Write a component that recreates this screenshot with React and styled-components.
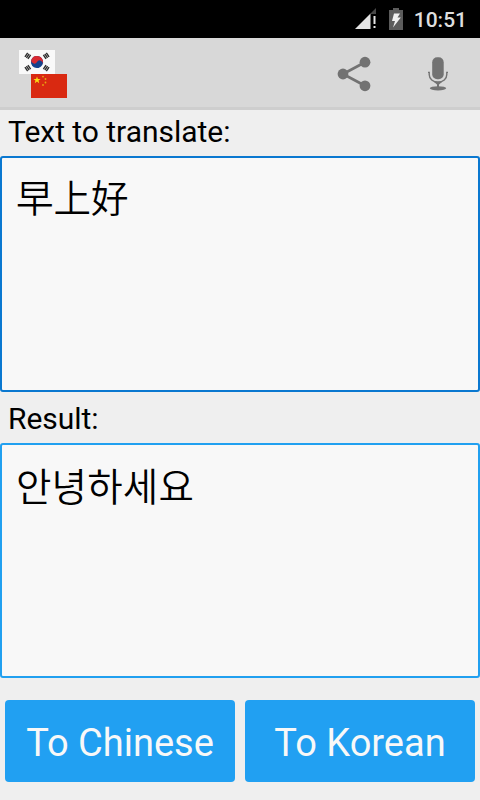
import React, { useState } from "react";
import styled, { createGlobalStyle } from "styled-components";

const GlobalStyle = createGlobalStyle`
  * {
    box-sizing: border-box;
  }
  body {
    margin: 0;
    background: #efefef;
    font-family: Roboto, "Noto Sans CJK KR", sans-serif;
  }
`;
const Screen = styled.div`
  width: 480px;
  height: 800px;
  display: flex;
  flex-direction: column;
  background: #efefef;
  overflow: hidden;
`;
const StatusBar = styled.div`
  height: 38px;
  flex: none;
  display: flex;
  align-items: center;
  justify-content: flex-end;
  padding-right: 13px;
  background: #000;
`;
const StatusIcon = styled.svg`
  display: block;
  margin-right: ${(props) => props.$gap}px;
`;
const Clock = styled.div`
  padding-top: 2px;
  font-size: 21px;
  font-weight: 500;
  line-height: 36px;
  color: #dedede;
`;
const ActionBar = styled.div`
  height: 72px;
  flex: none;
  display: flex;
  align-items: center;
  justify-content: space-between;
  padding: 3px 24px 0 19px;
  background: #d8d8d8;
  border-bottom: 3px solid #cecece;
`;
const Actions = styled.div`
  display: flex;
  align-items: center;
  gap: 48px;
`;
const IconButton = styled.button`
  display: block;
  padding: 0;
  border: 0;
  background: none;
  cursor: pointer;
  svg {
    display: block;
  }
`;
const Label = styled.label`
  height: ${(props) => props.$height}px;
  flex: none;
  padding: ${(props) => props.$top}px 8px 0;
  font-size: 30px;
  letter-spacing: -0.03px;
  line-height: 36px;
  color: #000;
`;
const TextBox = styled.div`
  height: ${(props) => props.$height}px;
  flex: none;
  padding: ${(props) => props.$top}px 14px 10px;
  border: 2px solid ${(props) => (props.$focused ? "#0a78d0" : "#21a0f0")};
  border-radius: 3px;
  background: #f8f8f8;
  font-family: Roboto, "Noto Sans CJK ${(props) => props.$script}", sans-serif;
  font-size: ${(props) => props.$size}px;
  font-weight: 350;
  letter-spacing: ${(props) => props.$spacing}px;
  line-height: 56px;
  color: #000;
  outline: none;
`;
const ButtonRow = styled.div`
  display: grid;
  grid-template-columns: 1fr 1fr;
  gap: 10px;
  padding: 22px 5px 18px;
`;
const StyleButton = styled.button`
  height: 82px;
  padding: 4px 0 0;
  border: 0;
  border-radius: 4px;
  background: #21a0f2;
  font-family: inherit;
  font-size: 38px;
  color: #f8f8f8;
  cursor: pointer;
`;

function SignalIcon() {
  return (
    <StatusIcon $gap={12} width="22" height="22" viewBox="0 0 22 22">
      <path d="M21 0V6H15.5V5.5Z" fill="#484848" />
      <path d="M0 21L15.5 5.5V21Z" fill="#e4e4e4" />
      <path d="M18.5 8H20.5V16H18.5ZM18.5 18H20.5V20H18.5Z" fill="#e4e4e4" />
    </StatusIcon>
  );
}

function BatteryIcon() {
  return (
    <StatusIcon $gap={11} width="14" height="22" viewBox="0 0 14 22">
      <path d="M4 0H10V2H14V22H0V2H4Z" fill="#5c5c5c" />
      <path d="M5 5.5H11L8.5 9.5H11.8L4 19.5L6 13H3Z" fill="#f0f0f0" />
    </StatusIcon>
  );
}

function Trigram({ x, y, angle }) {
  return (
    <g transform={`translate(${x} ${y}) rotate(${angle})`} fill="#2c2c2c">
      <rect x="-2.4" y="-2.5" width="4.8" height="1.4" />
      <rect x="-2.4" y="-0.7" width="4.8" height="1.4" />
      <rect x="-2.4" y="1.1" width="4.8" height="1.4" />
    </g>
  );
}

function FlagsLogo() {
  return (
    <svg width="48" height="48" viewBox="0 0 48 48">
      <rect width="36" height="24" fill="#f9f9f9" />
      <g transform="rotate(30 18 12)">
        <circle cx="18" cy="12" r="6.1" fill="#14418c" />
        <path
          d="M11.9 12A6.1 6.1 0 0 1 24.1 12A3.05 3.05 0 0 0 18 12A3.05 3.05 0 0 1 11.9 12Z"
          fill="#d82a32"
        />
      </g>
      <Trigram x={8.8} y={5.8} angle={-56} />
      <Trigram x={27.2} y={5.8} angle={56} />
      <Trigram x={8.8} y={18.2} angle={56} />
      <Trigram x={27.2} y={18.2} angle={-56} />
      <rect x="12" y="24" width="36" height="24" fill="#d92911" />
      <path
        d="M18 26.4L18.9 28.9H21.6L19.5 30.6L20.2 33.2L18 31.6L15.8 33.2L16.5 30.6L14.4 28.9H17.1Z"
        fill="#fbdc14"
      />
      <g fill="#eaa512">
        <circle cx="24" cy="26.6" r="0.9" />
        <circle cx="26.5" cy="29" r="0.9" />
        <circle cx="26.5" cy="32.5" r="0.9" />
        <circle cx="24" cy="35" r="0.9" />
      </g>
    </svg>
  );
}

function ShareIcon() {
  return (
    <svg width="34" height="36" viewBox="0 0 34 36">
      <path
        d="M28 6.2L6 18L28 29.8"
        fill="none"
        stroke="#727272"
        strokeWidth="2.7"
      />
      <g fill="#727272">
        <circle cx="28" cy="6.2" r="5.4" />
        <circle cx="6" cy="18" r="5.4" />
        <circle cx="28" cy="29.8" r="5.4" />
      </g>
    </svg>
  );
}

function MicIcon() {
  return (
    <svg width="37" height="36" viewBox="0 0 37 36">
      <rect x="13.2" y="1.3" width="11.5" height="22" rx="5" fill="#727272" />
      <path
        d="M9 16.4H10.2V18.5C10.2 23 14 26 19 26S27.8 23 27.8 18.5V16.4H29"
        fill="none"
        stroke="#727272"
        strokeWidth="1.4"
      />
      <path d="M15 26H23L20 28.5V31H18V28.5Z" fill="#727272" />
      <ellipse cx="19" cy="32.3" rx="8.2" ry="2.1" fill="#727272" />
    </svg>
  );
}

function App() {
  const [focused, setFocused] = useState("source");

  return (
    <Screen>
      <GlobalStyle />
      <StatusBar>
        <SignalIcon />
        <BatteryIcon />
        <Clock>10:51</Clock>
      </StatusBar>
      <ActionBar>
        <FlagsLogo />
        <Actions>
          <IconButton aria-label="Share">
            <ShareIcon />
          </IconButton>
          <IconButton aria-label="Speak">
            <MicIcon />
          </IconButton>
        </Actions>
      </ActionBar>
      <Label $height={46} $top={4}>
        Text to translate:
      </Label>
      <TextBox
        $height={236}
        $top={13}
        $script="SC"
        $size={37.5}
        $spacing={0}
        $focused={focused === "source"}
        tabIndex={0}
        onFocus={() => setFocused("source")}
      >
        早上好
      </TextBox>
      <Label $height={51} $top={9}>
        Result:
      </Label>
      <TextBox
        $height={235}
        $top={15}
        $script="KR"
        $size={38.5}
        $spacing={0.2}
        $focused={focused === "result"}
        tabIndex={0}
        onFocus={() => setFocused("result")}
      >
        안녕하세요
      </TextBox>
      <ButtonRow>
        <StyleButton>To Chinese</StyleButton>
        <StyleButton>To Korean</StyleButton>
      </ButtonRow>
    </Screen>
  );
}

export default App;
